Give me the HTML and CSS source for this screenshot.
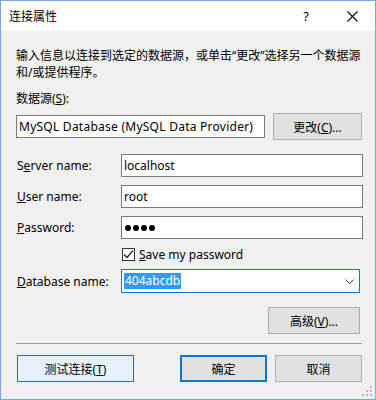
FILE: index.html
```html
<!DOCTYPE html>
<html lang="zh-CN">
<head>
  <meta charset="UTF-8" />
  <title>连接属性</title>
  <link rel="stylesheet" href="styles.css">
</head>
<body>

  <div class="window">
    <div class="titlebar">
      <span class="title">连接属性</span>
      <span class="caption-btn help">?</span>
      <span class="caption-btn close">
        <svg width="11" height="11" viewBox="0 0 11 11"><path d="M0.5 0.5 L10.5 10.5 M10.5 0.5 L0.5 10.5" stroke="#000" stroke-width="1.1" fill="none"/></svg>
      </span>
    </div>

    <div class="content">
      <p class="intro">
        <span class="line">输入信息以连接到选定的数据源，或单击“更改”选择另一个数据源</span>
        <span class="line">和/或提供程序。</span>
      </p>

      <div class="ds-label">数据源(<u>S</u>):</div>
      <div class="ds-row">
        <div class="ds-box">MySQL Database (MySQL Data Provider)</div>
        <button class="btn btn-change">更改(<u>C</u>)...</button>
      </div>

      <!-- connection fields -->
      <div class="fields">
        <label class="field-label">S<u>e</u>rver name:</label>
        <div class="textbox">localhost</div>

        <label class="field-label"><u>U</u>ser name:</label>
        <div class="textbox">root</div>

        <label class="field-label"><u>P</u>assword:</label>
        <div class="textbox">
          <span class="dot"></span><span class="dot"></span><span class="dot"></span><span class="dot"></span>
        </div>

        <div></div>
        <div class="check-row">
          <span class="checkbox">
            <svg width="11" height="11" viewBox="0 0 11 11"><path d="M1 5.5 L4 8.5 L10 1.5" stroke="#222" stroke-width="1.2" fill="none"/></svg>
          </span>
          <span><u>S</u>ave my password</span>
        </div>

        <label class="field-label db-label"><u>D</u>atabase name:</label>
        <div class="combo">
          <span class="selected">404abcdb</span>
          <svg class="chevron" width="9" height="5" viewBox="0 0 9 5"><path d="M0.5 0.5 L4.5 4.5 L8.5 0.5" stroke="#444" stroke-width="1" fill="none"/></svg>
        </div>
      </div>

      <div class="adv-row">
        <button class="btn btn-adv">高级(<u>V</u>)...</button>
      </div>

      <div class="separator"></div>

      <div class="footer">
        <button class="btn btn-test">测试连接(<u>T</u>)</button>
        <button class="btn btn-ok">确定</button>
        <button class="btn btn-cancel">取消</button>
      </div>
    </div>

    <svg class="grip" width="11" height="11" viewBox="0 0 11 11">
      <rect x="8" y="0" width="2" height="2" fill="#b8b8b8"/>
      <rect x="4" y="4" width="2" height="2" fill="#b8b8b8"/>
      <rect x="8" y="4" width="2" height="2" fill="#b8b8b8"/>
      <rect x="0" y="8" width="2" height="2" fill="#b8b8b8"/>
      <rect x="4" y="8" width="2" height="2" fill="#b8b8b8"/>
      <rect x="8" y="8" width="2" height="2" fill="#b8b8b8"/>
    </svg>
  </div>

</body>
</html>
```

FILE: styles.css
```css
* {
  box-sizing: border-box;
  margin: 0;
  padding: 0;
}

body {
  font-family: 'Noto Sans', 'Noto Sans CJK SC', sans-serif;
  font-size: 12px;
  color: #000;
  background: #fff;
}

.window {
  position: relative;
  width: 376px;
  height: 400px;
  border: 1px solid #74aae2;
  background: #f0f0f0;
}

.titlebar {
  height: 30px;
  background: #fff;
  display: flex;
  align-items: center;
  padding-left: 8px;
}

.title {
  font-size: 12px;
}

.caption-btn {
  width: 46px;
  height: 30px;
  display: flex;
  align-items: center;
  justify-content: center;
}

.help {
  margin-left: auto;
  font-size: 13px;
}

.content {
  padding: 16px 13px 0 15px;
}

.intro {
  line-height: 17px;
}

.intro .line {
  display: block;
  white-space: nowrap;
}

.ds-label {
  margin-top: 9px;
  line-height: 17px;
}

.ds-row {
  margin-top: 6px;
  display: flex;
  align-items: center;
  gap: 8px;
}

.ds-box {
  width: 249px;
  height: 23px;
  border: 1px solid #7a7a7a;
  background: #fff;
  padding-left: 2px;
  line-height: 21px;
  letter-spacing: 0.25px;
  white-space: nowrap;
  overflow: hidden;
}

.btn {
  height: 27px;
  border: 1px solid #adadad;
  background: #e1e1e1;
  font-family: inherit;
  font-size: 12px;
  color: #000;
}

.btn-change {
  width: 89px;
}

.fields {
  margin-top: 14px;
  display: grid;
  grid-template-columns: 105px 242px;
  row-gap: 8px;
  align-items: center;
}

.field-label {
  padding-left: 1px;
}

.textbox {
  height: 23px;
  border: 1px solid #7a7a7a;
  background: #fff;
  padding-left: 2px;
  line-height: 21px;
  display: flex;
  align-items: center;
}

.dot {
  width: 6px;
  height: 6px;
  border-radius: 50%;
  background: #000;
  margin-right: 2px;
}

.dot:first-child {
  margin-left: 1px;
}

.check-row {
  height: 14px;
  display: flex;
  align-items: center;
  gap: 4px;
  margin-left: 1px;
}

.checkbox {
  width: 13px;
  height: 13px;
  border: 1px solid #333;
  background: #fff;
  display: flex;
  align-items: center;
  justify-content: center;
}

.combo {
  width: 239px;
  height: 24px;
  border: 1px solid #0078d7;
  background: #fff;
  display: flex;
  align-items: center;
  padding-left: 2px;
  padding-right: 5px;
}

.selected {
  background: #3399ff;
  color: #fff;
  line-height: 16px;
  padding: 0 1px;
}

.chevron {
  margin-left: auto;
}

.adv-row {
  margin-top: 14px;
  display: flex;
  justify-content: flex-end;
  padding-right: 2px;
}

.btn-adv {
  width: 92px;
}

.separator {
  margin-top: 9px;
  height: 1px;
  background: #a0a0a0;
}

.footer {
  margin-top: 11px;
  display: flex;
  gap: 8px;
}

.btn-test {
  width: 117px;
  margin-left: 1px;
  margin-right: auto;
  background: #e5f1fb;
  border-color: #0078d7;
}

.btn-ok {
  width: 87px;
  border: 2px solid #0078d7;
}

.btn-cancel {
  width: 87px;
}

.grip {
  position: absolute;
  right: 2px;
  bottom: 2px;
}
```
